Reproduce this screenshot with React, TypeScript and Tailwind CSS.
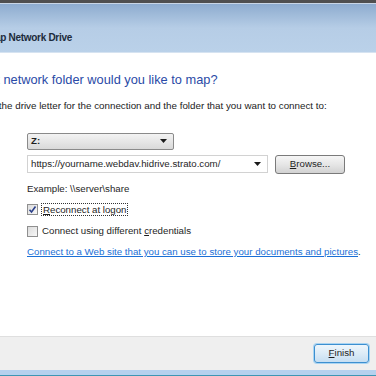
const font = { fontFamily: '"Liberation Sans", Arial, sans-serif' };

function Checkbox({ checked }: { checked?: boolean }) {
  return (
    <span className="flex h-[11px] w-[11px] items-center justify-center border border-[#8f8f8f] bg-gradient-to-br from-[#dcdcdc] to-[#f8f8f8]">
      {checked && (
        <svg width="9" height="9" viewBox="0 0 9 9">
          <path d="M1.5 4.8 L3.5 7 L7.5 1.5" fill="none" stroke="#2a3f8a" strokeWidth="1.6" />
        </svg>
      )}
    </span>
  );
}

function Caret() {
  return (
    <svg width="7" height="4" viewBox="0 0 7 4">
      <path d="M0 0 H7 L3.5 4 Z" fill="#1a1a1a" />
    </svg>
  );
}

export default function App() {
  return (
    <div className="flex h-[376px] w-[376px] flex-col overflow-hidden bg-white text-[#1e1e1e]" style={font}>
      {/* window frame top */}
      <div className="h-[3px] bg-[#4f4f4f]" />
      <div className="h-[1px] bg-[#c9d6e6]" />

      {/* title bar - the window is cropped on the left, so the title starts mid-word */}
      <div className="flex h-[48px] items-end bg-gradient-to-b from-[#8eaccf] via-[#b6cde6] to-[#bad1e9] pb-[7px]">
        <span className="ml-[-13px] text-[10px] font-bold tracking-[-0.3px] text-[#1c2b3c] whitespace-nowrap">
          Map Network Drive
        </span>
      </div>
      <div className="h-[1px] bg-[#d6e3f1]" />

      {/* content */}
      <div className="flex flex-1 flex-col">
        <div className="mt-[17px] ml-[-30px] text-[12.8px] whitespace-nowrap text-[#2a4aa6]">
          What network folder would you like to map?
        </div>
        <div className="mt-[10px] ml-[-36px] text-[9.8px] whitespace-nowrap text-[#222]">
          Specify the drive letter for the connection and the folder that you want to connect to:
        </div>

        <div className="ml-[27px] mt-[19px] flex flex-col text-[9.7px]">
          {/* drive select */}
          <div className="flex h-[17px] w-[147px] items-center justify-between rounded-[2px] border border-[#8a8a8a] bg-gradient-to-b from-[#f3f3f3] to-[#d9d9d9] pl-[3px] pr-[6px]">
            <span className="font-bold">Z:</span>
            <Caret />
          </div>

          {/* folder row */}
          <div className="mt-[5px] flex items-center gap-[7px]">
            <div className="flex h-[18px] w-[241px] items-center justify-between border border-[#d2d2d2] bg-white pl-[3px] pr-[6px]">
              <span className="whitespace-nowrap">https://yourname.webdav.hidrive.strato.com/</span>
              <Caret />
            </div>
            <div className="flex h-[19px] w-[70px] items-center justify-center rounded-[3px] border border-[#7a7a7a] bg-gradient-to-b from-[#f6f6f6] via-[#e6e6e6] to-[#d2d2d2]">
              <span><span className="underline">B</span>rowse...</span>
            </div>
          </div>

          <div className="mt-[8px] whitespace-nowrap">Example: \\server\share</div>

          <div className="mt-[7px] flex items-center gap-[3px]">
            <Checkbox checked />
            <span className="border border-dotted border-[#333] px-[1px] leading-[11px] whitespace-nowrap">
              <span className="underline">R</span>econnect at logon
            </span>
          </div>

          <div className="mt-[8px] flex items-center gap-[4px]">
            <Checkbox />
            <span className="whitespace-nowrap">
              Connect using different <span className="underline">c</span>redentials
            </span>
          </div>

          <div className="mt-[6px] whitespace-nowrap">
            <span className="text-[#1a6fd6] underline">
              Connect to a Web site that you can use to store your documents and pictures
            </span>
            .
          </div>
        </div>
      </div>

      {/* footer */}
      <div className="flex h-[34px] items-center justify-end border-t border-[#dfdfdf] bg-[#efefef] pr-[7px]">
        <div className="flex h-[19px] w-[55px] items-center justify-center rounded-[3px] border border-[#3c8fd0] bg-gradient-to-b from-[#eef6fc] via-[#dcebf7] to-[#c6def2] text-[9.7px] shadow-[0_0_0_1px_#a9d4f2]">
          <span><span className="underline">F</span>inish</span>
        </div>
      </div>
      <div className="h-[5px] bg-[#b5d1ee]" />
      <div className="h-[1px] bg-[#3d96b4]" />
    </div>
  );
}
